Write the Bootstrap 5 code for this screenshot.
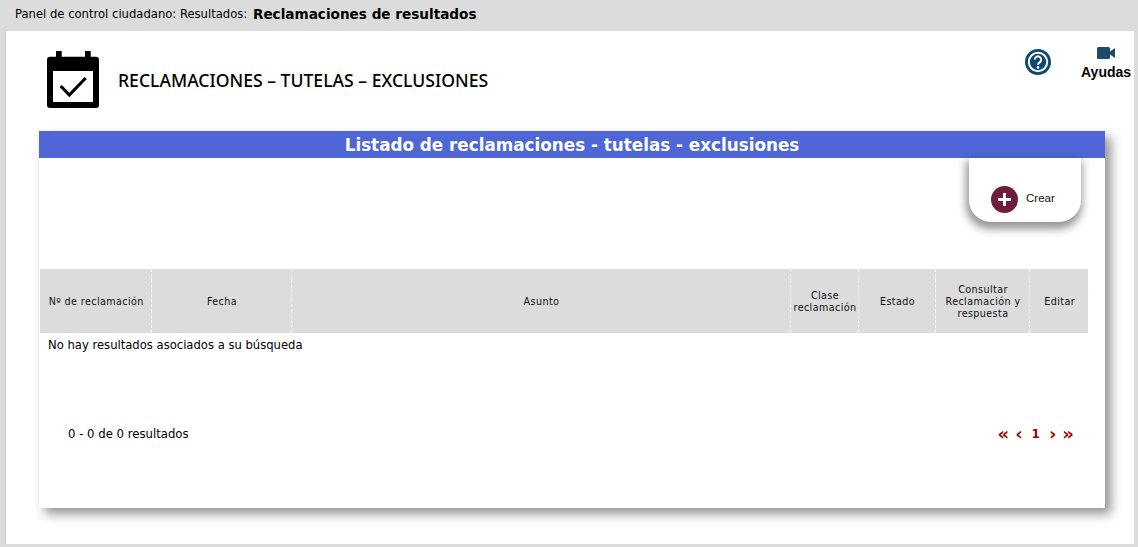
<!DOCTYPE html>
<html lang="es">
<head>
  <meta charset="UTF-8" />
  <title>Reclamaciones de resultados</title>
  <link href="https://cdn.jsdelivr.net/npm/bootstrap@5.3.0/dist/css/bootstrap.min.css" rel="stylesheet" />
  <style>
    html, body { height: 100%; overflow: hidden; }
    body { background: #dcdcdc; color: #000; font-family: "DejaVu Sans", sans-serif; }
    .top-bar { height: 29px; padding-left: 15px; font-size: 11.6px; }
    .top-bar strong { font-size: 13.6px; margin-left: 2px; }
    .white-panel { height: 513px; margin: 2px 4px 0 5px; background: #fff; border-left: 1px solid #c3c7d4; padding: 20px 0 0 33px; }
    .page-head { height: 80px; }
    .page-icon { margin-left: 8px; }
    .page-title { font-size: 17.6px; line-height: 24px; margin: 17px 0 0 19px; font-family: "Noto Sans", sans-serif; font-weight: 500; }
    .help-circle { margin: -2px 30px 0 0; }
    .help-video { width: 50px; margin-right: 3px; margin-top: -4px; font-family: "Liberation Sans", sans-serif; font-weight: 700; font-size: 14px; line-height: 18px; }
    .help-video svg { margin-bottom: 4px; }
    .list-card { width: 1066px; height: 377px; box-shadow: 6px 6px 10px rgba(0,0,0,.42); background: #fff; }
    .list-head { height: 27px; background: #4f67d6; color: #fff; font-weight: 700; font-size: 16.8px; line-height: 29px; text-align: center; }
    .create-row { height: 111px; padding-right: 24px; }
    .create-box { width: 112px; height: 64px; border-radius: 0 0 22px 22px; box-shadow: -1px 5px 8px 2px rgba(0,0,0,.42); padding: 28px 0 0 22px; font-family: "Liberation Sans", sans-serif; font-size: 11.5px; color: #111; }
    .create-text { margin-bottom: 2px; }
    .plus-dot { width: 27px; height: 27px; border-radius: 50%; background: #6f1d3b; margin-right: 8px; }
    .results-grid { width: 1048px; margin: 0 0 0 1px; table-layout: fixed; border-collapse: collapse; }
    .results-grid th { background: #dcdcdc; height: 64px; padding: 2px 1px 0 3px; font-size: 9.6px; font-weight: 400; line-height: 12px; letter-spacing: .4px; text-align: center; vertical-align: middle; border-left: 1px dashed #fff; color: #111; }
    .results-grid th:first-child { border-left: 0; }
    .empty-msg { font-size: 11.6px; margin: 4px 0 0 9px; line-height: 16px; }
    .pager-row { margin: 73px 31px 0 29px; font-size: 11.7px; line-height: 16px; }
    .pager-links { color: #990000; font-weight: 700; font-size: 18px; gap: 6px; }
    .pager-num { font-size: 12px; margin: 0 3px; }
  </style>
</head>
<body>
  <div class="top-bar d-flex align-items-center">
    <span>Panel de control ciudadano: Resultados:</span>&nbsp;<strong>Reclamaciones de resultados</strong>
  </div>

  <div class="white-panel">
    <div class="page-head d-flex align-items-start" style="width:1095px">
      <svg class="page-icon" width="52" height="57" viewBox="0 0 52 57">
        <rect x="9" y="0" width="5.7" height="8" fill="#000"/>
        <rect x="38" y="0" width="5.7" height="8" fill="#000"/>
        <path d="M3 5.7H49a3 3 0 0 1 3 3V54a3 3 0 0 1-3 3H3a3 3 0 0 1-3-3V8.7a3 3 0 0 1 3-3Z" fill="#000"/>
        <rect x="6" y="20" width="40" height="31" fill="#fff"/>
        <path d="M13.7 35l8.6 9L38.7 27" fill="none" stroke="#000" stroke-width="3.2"/>
      </svg>
      <div class="page-title flex-grow-1">RECLAMACIONES – TUTELAS – EXCLUSIONES</div>
      <svg class="help-circle" width="26" height="26" viewBox="0 0 26 26">
        <circle cx="13" cy="13" r="13" fill="#0c4a6e"/>
        <circle cx="13" cy="13" r="9.2" fill="none" stroke="#fff" stroke-width="2"/>
        <path d="M9.8 10.6a3.2 3.2 0 1 1 4.9 2.7c-1.1.7-1.7 1.2-1.7 2.4" fill="none" stroke="#fff" stroke-width="2"/>
        <circle cx="13" cy="18.4" r="1.3" fill="#fff"/>
      </svg>
      <div class="help-video text-center">
        <svg class="d-block mx-auto" width="18" height="12" viewBox="0 0 18 12">
          <rect x="0" y="0" width="13" height="12" rx="1.5" fill="#1f4a6b"/>
          <path d="M13 4.5 18 1V11L13 7.5Z" fill="#1f4a6b"/>
        </svg>
        Ayudas
      </div>
    </div>

    <div class="list-card">
      <div class="list-head">Listado de reclamaciones - tutelas - exclusiones</div>
      <div class="create-row d-flex justify-content-end">
        <div class="create-box">
          <div class="d-flex align-items-center">
            <span class="plus-dot d-flex align-items-center justify-content-center">
              <svg width="15" height="15" viewBox="0 0 15 15"><path d="M7.5 1V14M1 7.5H14" stroke="#fff" stroke-width="3"/></svg>
            </span>
            <span class="create-text">Crear</span>
          </div>
        </div>
      </div>
      <table class="results-grid">
        <colgroup>
          <col style="width:111px"><col style="width:140px"><col style="width:499px"><col style="width:68px"><col style="width:77px"><col style="width:94px"><col style="width:59px">
        </colgroup>
        <tr>
          <th>Nº de reclamación</th>
          <th>Fecha</th>
          <th>Asunto</th>
          <th>Clase reclamación</th>
          <th>Estado</th>
          <th>Consultar Reclamación y respuesta</th>
          <th>Editar</th>
        </tr>
      </table>
      <div class="empty-msg">No hay resultados asociados a su búsqueda</div>
      <div class="pager-row d-flex justify-content-between align-items-center">
        <span>0 - 0 de 0 resultados</span>
        <span class="pager-links d-flex align-items-center">
          <span>«</span><span>‹</span><span class="pager-num">1</span><span>›</span><span>»</span>
        </span>
      </div>
    </div>
  </div>
</body>
</html>
